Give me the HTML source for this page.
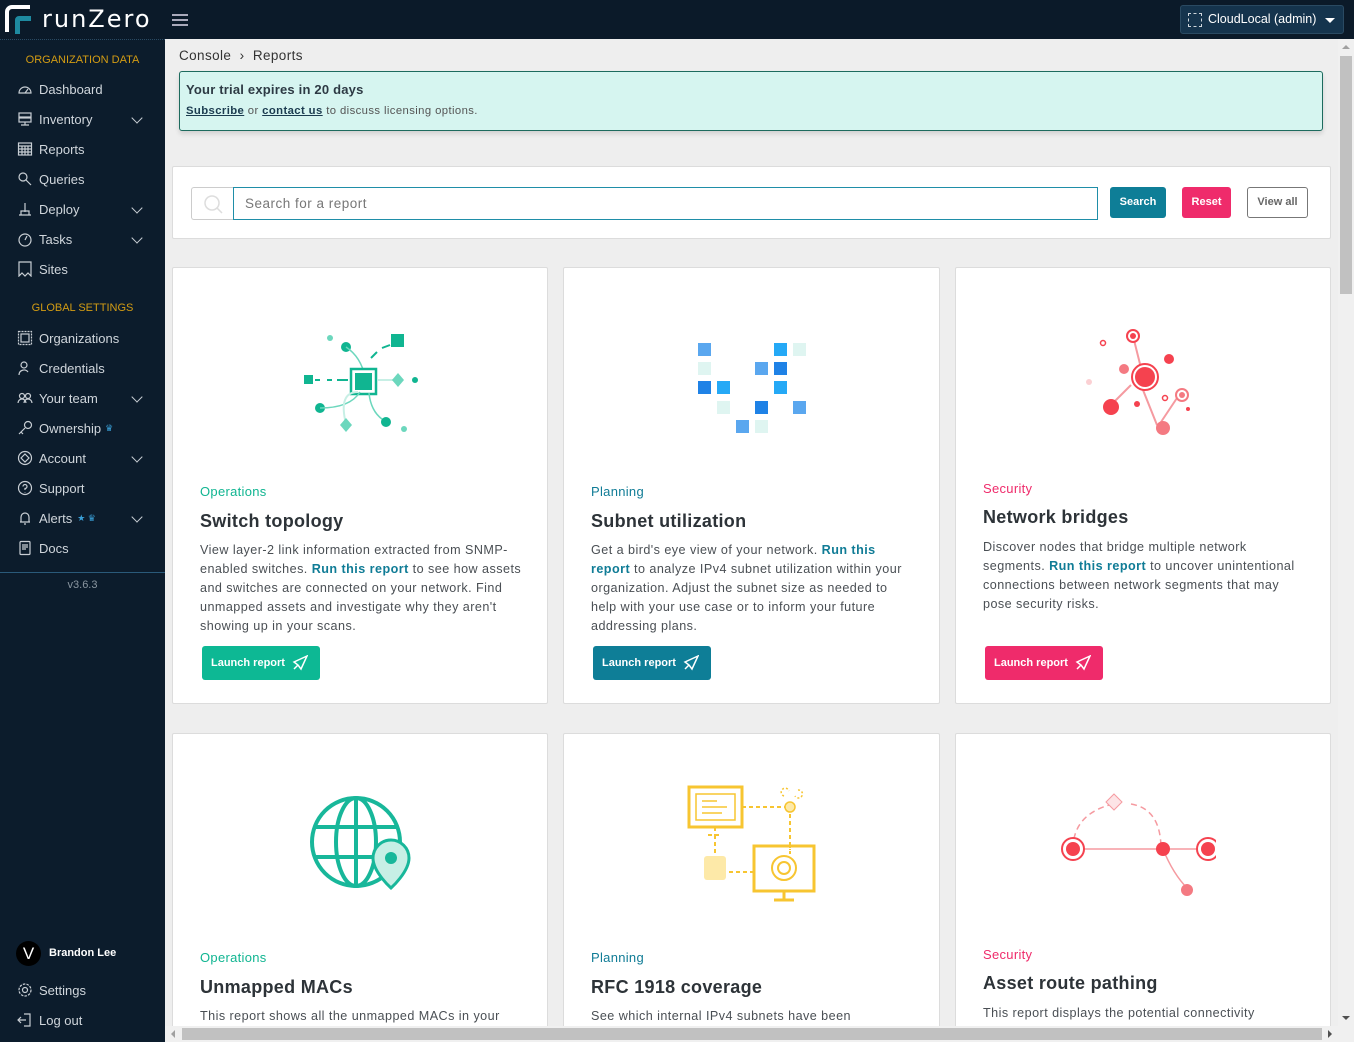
<!DOCTYPE html>
<html><head><meta charset="utf-8"><style>
*{box-sizing:border-box;margin:0;padding:0}
body{width:1354px;height:1042px;overflow:hidden;background:#eeeeee;font-family:"Liberation Sans",sans-serif;position:relative;color:#333}
.top{position:absolute;left:0;top:0;width:1354px;height:39px;background:#0b1a29}
.side{position:absolute;left:0;top:39px;width:165px;height:1003px;background:#0c1c2c;color:#d0d6dc}
.sec{color:#d39c13;font-size:11px;text-align:center;}
.it{position:absolute;left:17px;font-size:13px;color:#d0d6dc;display:flex;align-items:center}
.it svg{width:16px;height:16px;margin-right:6px;stroke:#c8ced4;fill:none;stroke-width:1.2}
.chev{position:absolute;left:133px;width:8px;height:8px;border-right:1.5px solid #c8ced4;border-bottom:1.5px solid #c8ced4;transform:rotate(45deg)}
.card{position:absolute;background:#fff;border:1px solid #dcdcdc;border-radius:2px}
.cat{position:absolute;left:27px;font-size:13px;letter-spacing:.3px}
.ttl{position:absolute;left:27px;font-size:18px;font-weight:bold;color:#2d3338;letter-spacing:.3px}
.desc{position:absolute;left:27px;width:325px;font-size:12.6px;line-height:19px;color:#4a4f54;letter-spacing:.45px}
.desc b{font-weight:bold}
.btn{position:absolute;left:29px;top:378px;width:118px;height:34px;border-radius:3px;color:#fff;font-size:11px;font-weight:bold;display:flex;align-items:center;padding-left:9px}
.btn svg{margin-left:7px}
</style></head><body>
<div class="top">
 <svg style="position:absolute;left:4px;top:4px" width="32" height="32" viewBox="0 0 32 32"><path d="M3 28V8a5 5 0 0 1 5-5h18" stroke="#fff" stroke-width="4" fill="none"/><path d="M11 30V16a4 4 0 0 1 4-4h12v5H16v13z" fill="#1e8aa0"/></svg>
 <div style="position:absolute;left:42px;top:5px;color:#fff;font-size:24px;letter-spacing:2px;font-family:'DejaVu Sans',sans-serif">runZero</div>
 <div style="position:absolute;left:172px;top:14px;width:16px;height:2px;background:#aab;box-shadow:0 5px 0 #aab,0 10px 0 #aab"></div>
 <div style="position:absolute;left:1180px;top:5px;width:164px;height:29px;background:#15344d;border:1px solid #2a4a62;border-radius:3px;color:#fff;font-size:12.5px;padding:6px 0 0 27px">CloudLocal (admin)
  <div style="position:absolute;left:7px;top:7px;width:14px;height:14px;border:1px dashed #cfd6dc"></div>
  <div style="position:absolute;right:8px;top:12px;border:5px solid transparent;border-top-color:#fff"></div></div>
</div>
<div class="side">
 <div style="position:absolute;left:0;top:0;width:165px;height:4px;border-top:1px dotted #2a4a62"></div>
 <div class="sec" style="position:absolute;top:15px;width:165px">ORGANIZATION DATA</div>
 <div class="it" style="top:42px"><svg viewBox="0 0 16 16"><path d="M2 12a6 6 0 0 1 12 0z M8 12l3-4"/></svg>Dashboard</div>
 <div class="it" style="top:72px"><svg viewBox="0 0 16 16"><rect x="2" y="2" width="12" height="4"/><rect x="2" y="7" width="12" height="4"/><path d="M8 11v3M4 14h8"/></svg>Inventory</div><div class="chev" style="top:75px"></div>
 <div class="it" style="top:102px"><svg viewBox="0 0 16 16"><rect x="1.5" y="2" width="13" height="12"/><path d="M1.5 5h13M1.5 8h13M1.5 11h13M5 5v9M8 5v9M11 5v9"/></svg>Reports</div>
 <div class="it" style="top:132px"><svg viewBox="0 0 16 16"><circle cx="6" cy="6" r="4"/><path d="M9 9l5 5"/></svg>Queries</div>
 <div class="it" style="top:162px"><svg viewBox="0 0 16 16"><path d="M2 14h12M4 14v-4h8v4M8 2v9"/></svg>Deploy</div><div class="chev" style="top:165px"></div>
 <div class="it" style="top:192px"><svg viewBox="0 0 16 16"><circle cx="8" cy="9" r="6"/><path d="M8 9l2-4"/></svg>Tasks</div><div class="chev" style="top:195px"></div>
 <div class="it" style="top:222px"><svg viewBox="0 0 16 16"><path d="M2 1h12v14l-3-3-3 3-3-3-3 3z"/></svg>Sites</div>
 <div class="sec" style="position:absolute;top:263px;width:165px">GLOBAL SETTINGS</div>
 <div class="it" style="top:291px"><svg viewBox="0 0 16 16" stroke-dasharray="2 1"><rect x="1.5" y="1.5" width="13" height="13"/><rect x="4" y="4" width="8" height="8" stroke-dasharray="none"/></svg>Organizations</div>
 <div class="it" style="top:321px"><svg viewBox="0 0 16 16"><circle cx="7" cy="5" r="3"/><path d="M2 15a5 5 0 0 1 9-3"/></svg>Credentials</div>
 <div class="it" style="top:351px"><svg viewBox="0 0 16 16"><circle cx="5" cy="6" r="2.5"/><circle cx="11" cy="6" r="2.5"/><path d="M1 13a4 4 0 0 1 8 0M7 13a4 4 0 0 1 8 0"/></svg>Your team</div><div class="chev" style="top:354px"></div>
 <div class="it" style="top:381px"><svg viewBox="0 0 16 16"><circle cx="11" cy="5" r="3.5"/><path d="M8 8l-6 6M4 12l2 2"/></svg>Ownership <span style="color:#3aa0d8;font-size:9px;margin-left:4px">♛</span></div>
 <div class="it" style="top:411px"><svg viewBox="0 0 16 16"><circle cx="8" cy="8" r="6.5"/><path d="M8 4l4 4-4 4-4-4z"/></svg>Account</div><div class="chev" style="top:414px"></div>
 <div class="it" style="top:441px"><svg viewBox="0 0 16 16"><circle cx="8" cy="8" r="6.5"/><path d="M6 6.5a2 2 0 1 1 2 2v1.5M8 12v.5"/></svg>Support</div>
 <div class="it" style="top:471px"><svg viewBox="0 0 16 16"><path d="M4 12V7a4 4 0 0 1 8 0v5zM3 12h10M7 14h2"/></svg>Alerts <span style="color:#3aa0d8;font-size:9px;margin-left:5px">★ ♛</span></div><div class="chev" style="top:474px"></div>
 <div class="it" style="top:501px"><svg viewBox="0 0 16 16"><rect x="3" y="1.5" width="10" height="13" rx="1"/><path d="M5 5h6M5 7h6M5 9h4"/></svg>Docs</div>
 <div style="position:absolute;top:533px;left:0;width:165px;border-top:1px solid #2a5a7a"></div>
 <div style="position:absolute;top:540px;width:165px;text-align:center;font-size:11px;color:#8a96a0">v3.6.3</div>
 <div style="position:absolute;left:16px;top:902px;width:25px;height:25px;border-radius:50%;background:#000;color:#fff;font-size:17px;text-align:center;line-height:25px">V</div>
 <div style="position:absolute;left:49px;top:908px;font-size:11px;font-weight:bold;color:#fff">Brandon Lee</div>
 <div class="it" style="top:943px"><svg viewBox="0 0 16 16"><circle cx="8" cy="8" r="2.5"/><circle cx="8" cy="8" r="6" stroke-dasharray="2.5 1.2"/></svg>Settings</div>
 <div class="it" style="top:973px"><svg viewBox="0 0 16 16"><path d="M7 2h6v12H7M1 8h8M4 5l-3 3 3 3"/></svg>Log out</div>
</div>
<div style="position:absolute;left:179px;top:48px;font-size:13.5px;color:#333;letter-spacing:.4px">Console &nbsp;›&nbsp; Reports</div>
<div style="position:absolute;left:179px;top:71px;width:1144px;height:60px;background:#d6f5f0;border:1px solid #1d6b5e;border-radius:3px;box-shadow:0 3px 5px rgba(0,0,0,.12)">
 <div style="position:absolute;left:6px;top:10px;font-size:13px;font-weight:bold;color:#2d3a44;letter-spacing:.2px">Your trial expires in 20 days</div>
 <div style="position:absolute;left:6px;top:33px;font-size:11.3px;color:#555;letter-spacing:.4px"><u style="font-weight:bold;color:#1b3b4f">Subscribe</u> or <u style="font-weight:bold;color:#1b3b4f">contact us</u> to discuss licensing options.</div>
</div>
<div class="card" style="left:172px;top:166px;width:1159px;height:73px">
 <div style="position:absolute;left:18px;top:20px;width:42px;height:33px;border:1px solid #ccc;border-right:none;border-radius:3px 0 0 3px"><svg width="42" height="33"><circle cx="20" cy="15" r="7" stroke="#ddd" stroke-width="1.5" fill="none"/><path d="M25 20l5 5" stroke="#ddd" stroke-width="1.5"/></svg></div>
 <div style="position:absolute;left:60px;top:20px;width:865px;height:33px;border:1px solid #1f8ea8;font-size:13.5px;color:#777;padding:8px 11px;letter-spacing:.5px">Search for a report</div>
 <div style="position:absolute;left:937px;top:20px;width:56px;height:31px;background:#0e7e97;border-radius:3px;color:#fff;font-size:11px;font-weight:bold;text-align:center;line-height:31px">Search</div>
 <div style="position:absolute;left:1009px;top:20px;width:49px;height:31px;background:#ef2b6b;border-radius:3px;color:#fff;font-size:11px;font-weight:bold;text-align:center;line-height:31px">Reset</div>
 <div style="position:absolute;left:1074px;top:20px;width:61px;height:31px;border:1px solid #777;border-radius:3px;color:#666;font-size:11px;font-weight:bold;text-align:center;line-height:29px">View all</div>
</div>

<!-- Row 1 -->
<div class="card" style="left:172px;top:267px;width:376px;height:437px">
 <svg style="position:absolute;left:125px;top:58px" width="125" height="110" viewBox="0 0 125 110"><g fill="#10b591" stroke="#10b591"><circle cx="32" cy="12" r="3" fill="#6cd7bd" stroke="none"/><circle cx="48" cy="21" r="5" stroke="none"/><path d="M48 21q15 10 19 30" fill="none" stroke="#6cd7bd" stroke-width="1.5"/><path d="M68 48v-6M73 32l6-6M84 22l8-3" fill="none" stroke-width="2"/><rect x="93" y="8" width="13" height="13" stroke="none"/><rect x="53" y="43" width="25" height="25" fill="#fff" stroke-width="2.5"/><rect x="57" y="47" width="17" height="17" stroke="none"/><rect x="6" y="49" width="9" height="9" stroke="none"/><path d="M17 54h5M29 54h5M39 54h11" stroke-width="2"/><path d="M80 54h15" stroke="#c7efe5" stroke-width="2"/><path d="M100 47l6 7-6 7-6-7z" fill="#6cd7bd" stroke="none"/><circle cx="117" cy="54" r="3" stroke="none"/><circle cx="22" cy="82" r="5" stroke="none"/><path d="M22 82q30 0 40-16" fill="none" stroke="#6cd7bd" stroke-width="1.5"/><path d="M60 66q-20 0-12 32" fill="none" stroke="#c7efe5" stroke-width="2"/><path d="M48 92l6 7-6 7-6-7z" fill="#6cd7bd" stroke="none"/><path d="M71 67q2 20 16 28" fill="none" stroke="#6cd7bd" stroke-width="1.5"/><circle cx="88" cy="96" r="5" stroke="none"/><circle cx="106" cy="103" r="3" fill="#6cd7bd" stroke="none"/></g></svg>
 <div class="cat" style="top:216px;color:#10b591">Operations</div>
 <div class="ttl" style="top:243px">Switch topology</div>
 <div class="desc" style="top:273px">View layer-2 link information extracted from SNMP-enabled switches. <b style="color:#107c96">Run this report</b> to see how assets and switches are connected on your network. Find unmapped assets and investigate why they aren't showing up in your scans.</div>
 <div class="btn" style="background:#0db894">Launch report<svg width="16" height="16" viewBox="0 0 16 16" fill="none" stroke="#fff" stroke-width="1.5"><path d="M15 1L2 7l4 3 3 4zM6 10l-4 4"/></svg></div>
</div>
<div class="card" style="left:563px;top:267px;width:377px;height:437px">
 <svg style="position:absolute;left:132px;top:73px" width="115" height="95"><g><rect x="2" y="2" width="13" height="13" fill="#5aa7ef"/><rect x="78" y="2" width="13" height="13" fill="#25a9f6"/><rect x="97" y="2" width="13" height="13" fill="#dff5f1"/><rect x="2" y="21" width="13" height="13" fill="#dff5f1"/><rect x="59" y="21" width="13" height="13" fill="#5aa7ef"/><rect x="78" y="21" width="13" height="13" fill="#1f82e6"/><rect x="2" y="40" width="13" height="13" fill="#1f82e6"/><rect x="21" y="40" width="13" height="13" fill="#25a9f6"/><rect x="78" y="40" width="13" height="13" fill="#25a9f6"/><rect x="21" y="60" width="13" height="13" fill="#dff5f1"/><rect x="59" y="60" width="13" height="13" fill="#1f82e6"/><rect x="97" y="60" width="13" height="13" fill="#5aa7ef"/><rect x="40" y="79" width="13" height="13" fill="#5aa7ef"/><rect x="59" y="79" width="13" height="13" fill="#dff5f1"/></g></svg>
 <div class="cat" style="top:216px;color:#107c96">Planning</div>
 <div class="ttl" style="top:243px">Subnet utilization</div>
 <div class="desc" style="top:273px">Get a bird's eye view of your network. <b style="color:#107c96">Run this report</b> to analyze IPv4 subnet utilization within your organization. Adjust the subnet size as needed to help with your use case or to inform your future addressing plans.</div>
 <div class="btn" style="background:#0e7e97">Launch report<svg width="16" height="16" viewBox="0 0 16 16" fill="none" stroke="#fff" stroke-width="1.5"><path d="M15 1L2 7l4 3 3 4zM6 10l-4 4"/></svg></div>
</div>
<div class="card" style="left:955px;top:267px;width:376px;height:437px">
 <svg style="position:absolute;left:125px;top:57px" width="115" height="110"><g fill="#f5424f"><path d="M52 11l10 40M30 80l20-20M60 60l16 40M78 100l20-30" stroke="#f59aa0" stroke-width="2"/><circle cx="52" cy="11" r="6" fill="#fff" stroke="#f5424f" stroke-width="2"/><circle cx="52" cy="11" r="3"/><circle cx="22" cy="18" r="2.5" fill="#fff" stroke="#f5424f" stroke-width="1.5"/><circle cx="88" cy="34" r="5"/><circle cx="43" cy="44" r="5" fill="#f47a82"/><circle cx="64" cy="52" r="13" fill="#fff" stroke="#f5424f" stroke-width="2"/><circle cx="64" cy="52" r="10"/><circle cx="8" cy="57" r="3" fill="#fbd0d3"/><circle cx="101" cy="70" r="6" fill="#fff" stroke="#f47a82" stroke-width="2"/><circle cx="101" cy="70" r="3" fill="#f47a82"/><circle cx="84" cy="73" r="2.5" fill="#fff" stroke="#f5424f" stroke-width="1.5"/><circle cx="30" cy="82" r="8"/><circle cx="56" cy="79" r="3"/><circle cx="107" cy="84" r="2"/><circle cx="82" cy="103" r="7" fill="#f47a82"/></g></svg>
 <div class="cat" style="top:213px;color:#ef2b6b">Security</div>
 <div class="ttl" style="top:239px">Network bridges</div>
 <div class="desc" style="top:270px">Discover nodes that bridge multiple network segments. <b style="color:#107c96">Run this report</b> to uncover unintentional connections between network segments that may pose security risks.</div>
 <div class="btn" style="background:#ef2b6b">Launch report<svg width="16" height="16" viewBox="0 0 16 16" fill="none" stroke="#fff" stroke-width="1.5"><path d="M15 1L2 7l4 3 3 4zM6 10l-4 4"/></svg></div>
</div>
<!-- Row 2 -->
<div class="card" style="left:172px;top:733px;width:376px;height:300px">
 <svg style="position:absolute;left:136px;top:58px" width="105" height="105"><g fill="none" stroke="#18b79a" stroke-width="4"><circle cx="47" cy="50" r="44"/><ellipse cx="47" cy="50" rx="20" ry="44"/><path d="M6 35h82M6 65h60M47 6v88"/></g><path d="M82 48a18 18 0 0 1 18 18c0 14-18 30-18 30s-18-16-18-30a18 18 0 0 1 18-18z" fill="#c7efe5" stroke="#18b79a" stroke-width="3"/><circle cx="82" cy="66" r="6" fill="#18b79a"/></svg>
 <div class="cat" style="top:216px;color:#10b591">Operations</div>
 <div class="ttl" style="top:243px">Unmapped MACs</div>
 <div class="desc" style="top:273px">This report shows all the unmapped MACs in your</div>
</div>
<div class="card" style="left:563px;top:733px;width:377px;height:300px">
 <svg style="position:absolute;left:122px;top:50px" width="135" height="125"><g fill="none" stroke="#f7c531" stroke-width="3"><rect x="3" y="3" width="53" height="40"/><rect x="10" y="10" width="39" height="26" stroke-width="1.5"/><path d="M16 17h15M16 23h25M16 29h20" stroke-width="1.5"/><path d="M29 43v8M22 51h14M56 23h44M104 30v36M104 60v10M29 51v30M36 88h32" stroke-dasharray="4 3" stroke-width="2"/><rect x="68" y="62" width="60" height="45"/><circle cx="98" cy="84" r="12" stroke-width="2"/><circle cx="98" cy="84" r="6" stroke-width="2"/><path d="M98 107v8M88 116h20"/></g><circle cx="104" cy="23" r="5" fill="#fde9a8" stroke="#f7c531" stroke-width="1.5"/><rect x="18" y="72" width="22" height="24" rx="3" fill="#fde9a8"/><path d="M98 12a4 4 0 1 1 5 -5M112 6a4 4 0 1 1 -3 6" stroke="#f7c531" stroke-width="1.5" fill="none" stroke-dasharray="2 2"/></svg>
 <div class="cat" style="top:216px;color:#107c96">Planning</div>
 <div class="ttl" style="top:243px">RFC 1918 coverage</div>
 <div class="desc" style="top:273px">See which internal IPv4 subnets have been</div>
</div>
<div class="card" style="left:955px;top:733px;width:376px;height:300px">
 <svg style="position:absolute;left:100px;top:55px" width="160" height="110"><g fill="none" stroke="#f59aa0" stroke-width="1.5"><path d="M17 60q0-35 40-45M75 15q30 5 30 45" stroke-dasharray="6 4"/><path d="M17 60h90M107 60h45M107 60q10 25 25 40"/></g><path d="M58 5l8 8-8 8-8-8z" fill="#fde4e6" stroke="#f59aa0"/><circle cx="17" cy="60" r="11" fill="#fff" stroke="#f5424f" stroke-width="2"/><circle cx="17" cy="60" r="7" fill="#f5424f"/><circle cx="107" cy="60" r="7" fill="#f5424f"/><circle cx="152" cy="60" r="11" fill="#fff" stroke="#f5424f" stroke-width="2"/><circle cx="152" cy="60" r="7" fill="#f5424f"/><circle cx="131" cy="101" r="6" fill="#f47a82"/></svg>
 <div class="cat" style="top:213px;color:#ef2b6b">Security</div>
 <div class="ttl" style="top:239px">Asset route pathing</div>
 <div class="desc" style="top:270px">This report displays the potential connectivity</div>
</div>
<!-- scrollbars -->
<div style="position:absolute;left:1338px;top:39px;width:16px;height:987px;background:#f0f0f0"><div style="position:absolute;left:2px;top:17px;width:12px;height:238px;background:#c1c1c1"></div><div style="position:absolute;left:4px;top:6px;border:4px solid transparent;border-bottom-color:#a0a0a0;border-top:none"></div><div style="position:absolute;left:4px;bottom:6px;border:4px solid transparent;border-top-color:#505050;border-bottom:none"></div></div>
<div style="position:absolute;left:165px;top:1026px;width:1189px;height:16px;background:#f0f0f0"><div style="position:absolute;left:17px;top:2px;width:1140px;height:12px;background:#c1c1c1"></div><div style="position:absolute;left:6px;top:4px;border:4px solid transparent;border-right-color:#a0a0a0;border-left:none"></div><div style="position:absolute;right:22px;top:4px;border:4px solid transparent;border-left-color:#505050;border-right:none"></div></div>
</body></html>
